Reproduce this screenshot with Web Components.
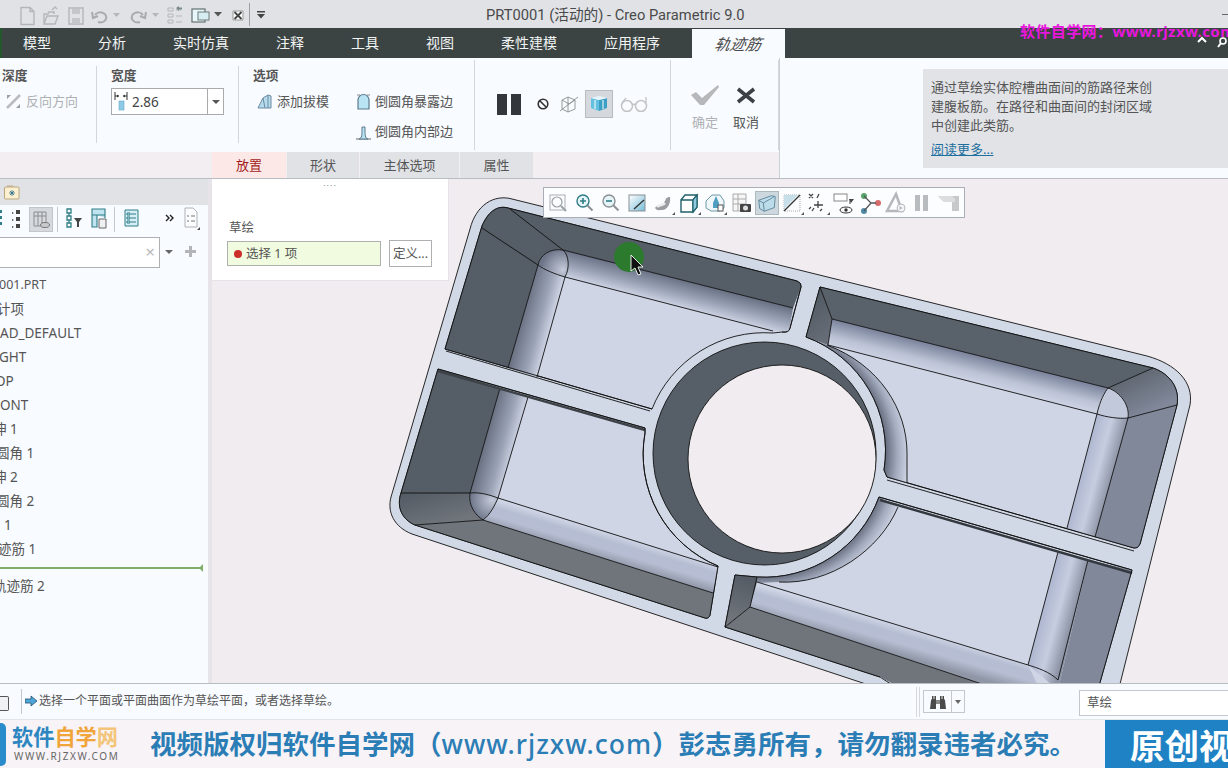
<!DOCTYPE html>
<html lang="zh">
<head>
<meta charset="utf-8">
<title>PRT0001 - Creo Parametric 9.0</title>
<style>
  html, body { margin: 0; padding: 0; overflow: hidden; }
  body { width: 1228px; height: 768px; font-family: "Noto Sans", "Noto Sans CJK SC", sans-serif; color: #444; }
  cr-app { width: 1228px; height: 768px; }
</style>
</head>
<body>
<cr-app></cr-app>
<script>
const FONT = `"Noto Sans", "Noto Sans CJK SC", sans-serif`

class CrTitlebar extends HTMLElement {
  constructor () {
    super()
    this.attachShadow({ mode: 'open' })
  }
  connectedCallback () {
    const g = 'fill="none" stroke="#b4b7ba" stroke-width="1.4"'
    this.shadowRoot.innerHTML = `
    <style>
      :host { display: flex; height: 28px; background: #e0e2e6; align-items: center; position: relative; }
      svg { display: block; flex: none; }
      .title { position: absolute; left: 486px; top: 5px; font: 14.700px/20px "Roboto", "Noto Sans CJK SC", sans-serif; color: #4a4a4a; white-space: nowrap; }
      .qat { display: flex; align-items: center; }
      .min { position: absolute; left: 1222px; top: 14px; width: 8px; height: 1px; background: #666; }
    </style>
    <div class="qat">
      <svg width="268" height="28" viewBox="0 0 268 28">
        <path d="M21 7.500h9l4 4v13h-13z M30 7.500v4h4" ${g}/>
        <path d="M44 24v-10h4l1-2h5v2 M44 24h11l3-8h-11l-3 8z M52 10l3-3 2 2" ${g}/>
        <path d="M69 8h14v16h-14z" ${g} stroke-width="2"/><rect x="72" y="9" width="8" height="5" fill="#c4c6c9"/><rect x="72" y="18" width="8" height="6" fill="#c4c6c9"/>
        <path d="M95 15a6 5 0 1 1 3 7 M92 12l1 6 5-2" fill="none" stroke="#a9acaf" stroke-width="2"/>
        <path d="M113 13h7l-3.500 4z" fill="#b4b7ba"/>
        <path d="M143 15a6 5 0 1 0-3 7 M146 12l-1 6-5-2" fill="none" stroke="#a9acaf" stroke-width="2"/>
        <path d="M152 13h7l-3.500 4z" fill="#b4b7ba"/>
        <path d="M168 8h5v3h-5z M168 14h5v3h-5z M168 20h5v3h-5z M176 10h5 M176 16h6 M176 22h6" fill="none" stroke="#b4b7ba"/><path d="M176 8l3-2v1.500h3v2h-3v1.500z" fill="#7d8a8a"/>
        <rect x="192" y="9" width="13" height="13" fill="#e7f6f8" stroke="#6f7a7a" stroke-width="1.300"/><rect x="198" y="12" width="11" height="8" fill="#d6eef2" stroke="#6f7a7a"/>
        <path d="M214 12h8l-4 4.500z" fill="#555"/>
        <path d="M233 11h10v9h-10z" fill="#fff" stroke="#999"/><path d="M234.500 12l7 7M241.500 12l-7 7" stroke="#444" stroke-width="1.800"/>
        <rect x="249" y="3" width="1" height="23" fill="#9ca0a4"/>
        <path d="M257 11h8v1.500h-8z M257 14h8l-4 4.500z" fill="#444"/>
      </svg>
    </div>
    <span class="title">PRT0001 (活动的) - Creo Parametric 9.0</span>
    <span class="min"></span>
    `
  }
}

class CrMenuTabs extends HTMLElement {
  constructor () {
    super()
    this.attachShadow({ mode: 'open' })
  }
  connectedCallback () {
    const names = ['模型', '分析', '实时仿真', '注释', '工具', '视图', '柔性建模', '应用程序']
    this.shadowRoot.innerHTML = `
    <style>
      :host { display: flex; height: 30px; background: #3b4443; position: relative; font: 14px/30px ${FONT}; color: #f2f4f4; }
      .edge { width: 2px; margin-right: -2.500px; background: #24582c; }
      .tab { padding: 0 23.500px; white-space: nowrap; }
      .active { margin-left: 8.500px; margin-top: 1px; width: 93px; box-sizing: border-box; text-align: center; background: #f8fbff; color: #4a4a4a; font: italic 15.500px/29px "Noto Sans CJK SC", sans-serif; }
      .active span { display: inline-block; transform: skewX(-12deg); }
      .mark { position: absolute; left: 1020px; top: -6px; width: 208px; overflow: hidden; white-space: nowrap; color: #e816dc; font: bold 15px/18px ${FONT}; letter-spacing: .4px; }
      svg { position: absolute; left: 1190px; top: 3px; }
    </style>
    <span class="edge"></span>
    ${names.map(n => `<span class="tab">${n}</span>`).join('')}
    <span class="active"><span>轨迹筋</span></span>
    <svg width="38" height="18" viewBox="0 0 38 18">
      <path d="M8 11l4-4 4 4" fill="none" stroke="#fff" stroke-width="2"/>
      <circle cx="33" cy="10" r="3" fill="none" stroke="#fff" stroke-width="1.600"/><path d="M31 12l-3 4" stroke="#fff" stroke-width="2"/>
    </svg>
    <span class="mark">软件自学网：www.rjzxw.com</span>
    `
  }
}

class CrGroup extends HTMLElement {
  constructor () {
    super()
    this.attachShadow({ mode: 'open' })
  }
  connectedCallback () {
    const label = this.getAttribute('label')
    this.shadowRoot.innerHTML = `
    <style>
      :host { display: block; box-sizing: border-box; border-right: 1px solid #d3d6da; flex: none; }
      .label { font: bold 12.700px/16px "Noto Sans CJK SC", sans-serif; color: #555; height: 16px; }
    </style>
    ${label ? `<div class="label">${label}</div>` : ''}
    <slot></slot>
    `
  }
}

class CrRibbon extends HTMLElement {
  constructor () {
    super()
    this.attachShadow({ mode: 'open' })
  }
  connectedCallback () {
    this.shadowRoot.innerHTML = `
    <style>
      :host { display: flex; height: 94px; background: #f8fbff; font: 13px/18px ${FONT}; color: #555; }
      svg { display: block; flex: none; }
      #g1 { width: 97px; margin: 8px 0 9px; padding: 1px 0 0 2px; }
      #g2 { width: 142px; margin: 8px 0 9px; padding: 1px 0 0 14px; }
      #g3 { width: 236px; margin: 2px 0; padding: 7px 0 0 14px; }
      #g4 { width: 196px; margin: 2px 0; padding: 0; display: flex; }
      #g5 { width: 108px; margin: 2px 0; }
      .btn { display: flex; align-items: center; gap: 4px; white-space: nowrap; height: 30px; }
      .off { color: #aeb0b3; }
      .reverse { margin: 3px 0 0 3px; }
      .input { display: flex; align-items: center; box-sizing: border-box; width: 113px; height: 27px; margin-top: 5px; border: 1px solid #a8aaae; background: #fff; font-size: 13.500px; color: #444; }
      .input span { flex: 1; padding-left: 0; }
      .input i { width: 15px; height: 25px; border-left: 1px solid #a8aaae; display: flex; align-items: center; justify-content: center; }
      .input i::after { content: ""; border: 4px solid transparent; border-top: 4px solid #555; border-bottom: 0; }
      .opts { display: grid; grid-template-columns: 99px auto; grid-auto-rows: 30px; margin: 3px 0 0 4px; width: 210px; }
      .tools { display: flex; align-items: center; height: 88px; }
      .pause { display: flex; gap: 4px; margin-left: 22px; }
      .pause b { width: 10px; height: 21px; background: #33363a; }
      .act { width: 28px; height: 28px; background: #d5d9dd; border: 1px solid #b8bcc0; box-sizing: border-box; display: flex; align-items: center; justify-content: center; margin: 0 7px 0 5px; }
      .finish { display: grid; grid-template-columns: 42px 40px; margin-left: 13px; padding-top: 24px; justify-items: center; font-size: 13px; line-height: 18px; }
      .finish svg { margin-bottom: 7px; }
    </style>
    <cr-group id="g1" label="深度">
      <div class="btn off reverse">
        <svg width="17" height="17" viewBox="0 0 17 17"><path d="M2 15L15 2" stroke="#b9bbbe" stroke-width="2.500"/><path d="M2 2l4 0-4 4zM15 15l-4 0 4-4z" fill="#9a9da0"/></svg>
        <span>反向方向</span>
      </div>
    </cr-group>
    <cr-group id="g2" label="宽度">
      <div class="input">
        <svg width="20" height="25" viewBox="0 0 20 25"><path d="M3 3v8M15 3v8M3 7h4M11 7h4" stroke="#333" fill="none"/><path d="M5 5.500L7 7 5 8.500zM13 5.500L11 7l2 1.500z" fill="#333"/><rect x="7" y="12" width="5" height="9" fill="#8fcbe6" stroke="#6aa9c9" stroke-width=".6"/></svg>
        <span>2.86</span><i></i>
      </div>
    </cr-group>
    <cr-group id="g3" label="选项">
      <div class="opts">
        <div class="btn"><svg width="16" height="17" viewBox="0 0 16 17"><path d="M1 15L6 5l5-3 3 1v12z" fill="#b5dcee" stroke="#6c8a9e"/><path d="M6 5l2 10M11 2v13" stroke="#6c8a9e" fill="none"/></svg><span>添加拔模</span></div>
        <div class="btn"><svg width="15" height="17" viewBox="0 0 15 17"><path d="M2 16V7a5.500 5.500 0 0 1 11 0v9z" fill="#b8e4f4" stroke="#5d7a8c" stroke-width="1.200"/><path d="M1 2h3M11 2h3" stroke="#8a8f93"/></svg><span>倒圆角暴露边</span></div>
        <div></div>
        <div class="btn"><svg width="15" height="17" viewBox="0 0 15 17"><path d="M0 16h15" stroke="#666"/><path d="M3 16c3-1 3-3 3-12h3c0 9 0 11 3 12z" fill="#b8e4f4" stroke="#5d7a8c"/></svg><span>倒圆角内部边</span></div>
      </div>
    </cr-group>
    <cr-group id="g4">
      <div class="tools">
        <div class="pause"><b></b><b></b></div>
        <svg style="margin-left:15px" width="14" height="14" viewBox="0 0 14 14"><circle cx="7" cy="7" r="4.800" fill="none" stroke="#333" stroke-width="1.600"/><path d="M3.500 3.500l7 7" stroke="#333" stroke-width="1.600"/></svg>
        <svg style="margin-left:9px" width="21" height="20" viewBox="0 0 21 20"><path d="M3 6l6-3 7 3v9l-7 3-6-3zM9 3v15M3 6l7 4 6-4M1 17L19 3" fill="none" stroke="#8b8e91" stroke-width=".9"/></svg>
        <div class="act"><svg width="20" height="18" viewBox="0 0 20 18"><path d="M2 3l8 2v11l-8-3z" fill="#63c0e0"/><path d="M18 3l-8 2v11l8-3z" fill="#3d9fc6"/><path d="M2 3l8-2 8 2-8 2z" fill="#e6f5fb"/><path d="M6 5v9M14 5v9" stroke="#fff"/></svg></div>
        <svg width="28" height="16" viewBox="0 0 28 16"><circle cx="7" cy="10" r="5.500" fill="none" stroke="#c2c4c6" stroke-width="1.500"/><circle cx="21" cy="10" r="5.500" fill="none" stroke="#c2c4c6" stroke-width="1.500"/><path d="M12 9q2-1.500 4 0M2 7L6 2M26 7V1" fill="none" stroke="#c2c4c6" stroke-width="1.300"/></svg>
      </div>
    </cr-group>
    <cr-group id="g5">
      <div class="finish">
        <svg width="30" height="22" viewBox="0 0 30 22"><path d="M1 11l5-3 6 6L28 1l1 2-15 18h-4z" fill="#b6b8ba"/></svg>
        <svg width="22" height="22" viewBox="0 0 22 22"><path d="M3 5l16 13M19 5L3 18" stroke="#3d4145" stroke-width="3.600"/></svg>
        <span class="off">确定</span><span>取消</span>
      </div>
    </cr-group>
    `
  }
}

class CrSubTabs extends HTMLElement {
  constructor () {
    super()
    this.attachShadow({ mode: 'open' })
  }
  connectedCallback () {
    this.shadowRoot.innerHTML = `
    <style>
      :host { display: flex; height: 26px; background: #f2eef1; padding-left: 212px; font: 13px/26px ${FONT}; color: #555; gap: 1px; }
      span { background: #e0e2e6; text-align: center; }
      .on { background: #fde8e8; color: #a31c1c; }
    </style>
    <span class="on" style="width:74px">放置</span>
    <span style="width:72px">形状</span>
    <span style="width:99px">主体选项</span>
    <span style="width:73px">属性</span>
    `
  }
}

class CrHelp extends HTMLElement {
  constructor () {
    super()
    this.attachShadow({ mode: 'open' })
  }
  connectedCallback () {
    this.shadowRoot.innerHTML = `
    <style>
      :host { display: block; box-sizing: border-box; width: 305px; height: 99px; margin: 11px 0 0 143px; padding: 9px 0 0 8px; background: #e1e3e7; font: 13px/19px ${FONT}; color: #555; }
      a { display: block; margin-top: 5px; color: #1c6f9e; text-decoration: underline; }
    </style>
    <div>通过草绘实体腔槽曲面间的筋路径来创<br>建腹板筋。在路径和曲面间的封闭区域<br>中创建此类筋。</div>
    <a>阅读更多...</a>
    `
  }
}

class CrTree extends HTMLElement {
  constructor () {
    super()
    this.attachShadow({ mode: 'open' })
  }
  connectedCallback () {
    const rows = [['001.PRT', -1, 12.5], ['计项', -3], ['AD_DEFAULT', 0], ['GHT', -1], ['OP', -5], ['ONT', 0], ['伸 1', -7], ['圆角 1', -4], ['伸 2', -7], ['圆角 2', -4], ['1', 4], ['迹筋 1', -2]]
    this.shadowRoot.innerHTML = `
    <style>
      :host { display: block; width: 208px; background: #f8fbff; font: 13.500px/24px ${FONT}; color: #555; overflow: hidden; flex: none; }
      svg { display: block; flex: none; }
      .strip { height: 26px; background: #e0e2e6; display: flex; align-items: center; padding-left: 4px; }
      .bar { height: 32px; display: flex; align-items: center; }
      .search { display: flex; align-items: center; height: 31px; }
      .field { box-sizing: border-box; width: 160px; height: 31px; border: 1px solid #aeb0b4; border-left: 0; background: #fff; color: #bbb; font-size: 17px; text-align: right; padding-right: 4px; line-height: 28px; }
      .rows { padding-top: 5px; }
      .rows div { height: 24px; white-space: nowrap; }
      .line { position: relative; height: 2px; margin: 6px 5px 5px 0; background: #7fae6a; }
      .line::after { content: ""; position: absolute; right: 0; top: -3px; border: 4px solid transparent; border-right: 4px solid #7fae6a; border-left: 0; }
    </style>
    <div class="strip">
      <svg width="16" height="16" viewBox="0 0 16 16"><path d="M3 1h6l1 2H3z" fill="#cfc7b4"/><rect x=".5" y="3" width="14.500" height="12" rx="1" fill="#fdf0d0" stroke="#b9a67e"/><path d="M8 6v6M5 9h6M6 7l4 4M10 7l-4 4" stroke="#27698a" stroke-width=".8"/></svg>
    </div>
    <div class="bar">
      <svg width="208" height="32" viewBox="0 0 208 32">
        <path d="M0 5h2v3h-2zM0 11h2v3h-2zM0 17h2v3h-2z" fill="#2e7f86"/>
        <path d="M16 5h4v4h-4zM16 12h4v4h-4zM16 19h4v4h-4z" fill="#444"/><path d="M12 7l2 1-2 1zM12 14l2 1-2 1zM12 21l2 1-2 1z" fill="#444"/>
        <rect x="29.500" y="2.500" width="23" height="24" fill="#d6d9dd" stroke="#c2c5c9"/><path d="M34 7h12v14h-12zM38 7v14M42 7v14M34 11h12" fill="none" stroke="#8a8e92"/><ellipse cx="45" cy="20" rx="4.500" ry="2.500" fill="#c8cbce" stroke="#777"/>
        <rect x="57" y="2" width="1" height="25" fill="#c7cacd"/>
        <path d="M67 4h4v4h-4zM67 11h4v4h-4zM67 18h4v4h-4zM69 8v3M69 15v3" fill="none" stroke="#2f7d85" stroke-width="1.300"/><path d="M74 13h8l-3 4v5h-2v-5z" fill="#444"/>
        <path d="M92 4h13v6h-13zM92 10h5v12h-5zM97 10h8v3" fill="#bfe3ef" stroke="#2f7d85" stroke-width="1.100"/><path d="M99 14h7v9h-7z" fill="#eef0f2" stroke="#666"/>
        <rect x="114" y="2" width="1" height="25" fill="#c7cacd"/>
        <path d="M125 5h13v16h-13z" fill="#d7eef6" stroke="#2f7d85"/><path d="M127 8h3v2h-3zM127 12h3v2h-3zM127 16h3v2h-3zM131 9h5M131 13h5M131 17h5" stroke="#2f7d85" fill="none"/>
        <path d="M166 10l3 3-3 3M170 10l3 3-3 3" fill="none" stroke="#222" stroke-width="1.400"/>
        <path d="M185 3h8l4 4v15h-12z" fill="#fbfcfd" stroke="#aeb2b6"/><path d="M187 11h2M187 16h2M191 11h4M191 16h4" stroke="#777"/><path d="M200 25v-3l-3 3z" fill="#444"/>
      </svg>
    </div>
    <div class="search">
      <div class="field">×</div>
      <svg width="48" height="31" viewBox="0 0 48 31"><path d="M5 13h8l-4 4z" fill="#666"/><path d="M25 14.500h11M30.500 9v11" stroke="#b2b4b7" stroke-width="3"/></svg>
    </div>
    <div class="rows">
      ${rows.map(r => `<div style="margin-left:${r[1]}px${r[2] ? `;font-size:${r[2]}px` : ''}">${r[0]}</div>`).join('')}
    </div>
    <div class="line"></div>
    <div class="rows" style="padding:0"><div style="margin-left:-7px">轨迹筋 2</div></div>
    `
  }
}

class CrSketchPanel extends HTMLElement {
  constructor () {
    super()
    this.attachShadow({ mode: 'open' })
  }
  connectedCallback () {
    this.shadowRoot.innerHTML = `
    <style>
      :host { display: block; box-sizing: border-box; position: absolute; left: 0; top: 0; width: 237px; height: 102px; background: #fff; border: 1px solid #e4e4e8; border-width: 0 1px 1px 0; font: 13px/18px ${FONT}; color: #555; }
      .dots { text-align: center; height: 12px; color: #999; font-size: 9px; line-height: 14px; letter-spacing: 1px; }
      .label { margin: 28px 0 0 17px; font-size: 12.500px; }
      .row { display: flex; gap: 8px; margin: 3px 0 0 15px; align-items: center; }
      .pick { box-sizing: border-box; width: 154px; height: 25px; border: 1px solid #aeb0ae; background: #f1fbdf; display: flex; align-items: center; padding-left: 6px; gap: 4px; font-size: 12.500px; }
      .pick i { width: 8px; height: 8px; border-radius: 50%; background: #cc2f2a; }
      .def { box-sizing: border-box; width: 43px; height: 27px; border: 1px solid #aeb0b4; text-align: center; line-height: 25px; font-size: 12.500px; white-space: nowrap; }
    </style>
    <div class="dots">····</div>
    <div class="label">草绘</div>
    <div class="row"><div class="pick"><i></i><span>选择 1 项</span></div><div class="def">定义...</div></div>
    `
  }
}

class CrViewBar extends HTMLElement {
  constructor () {
    super()
    this.attachShadow({ mode: 'open' })
  }
  connectedCallback () {
    const lens = (c, inner) => `<circle cx="10" cy="10" r="6" fill="#e6f3f7" stroke="${c}" stroke-width="1.400"/><path d="M14.500 14.500l5 5" stroke="#8b9094" stroke-width="2"/>${inner}`
    const drop = '<path d="M24 24v-3l-3 3z" fill="#555"/>'
    const icons = [
      `<rect x="3" y="4" width="15" height="15" fill="#fafcfd" stroke="#aab0b4"/><circle cx="10" cy="11" r="5" fill="none" stroke="#9aa0a4" stroke-width="1.200"/><path d="M14 15l5 5" stroke="#9aa0a4" stroke-width="2"/>`,
      lens('#2f7d85', '<path d="M7 10h6M10 7v6" stroke="#2f7d85" stroke-width="1.600"/>'),
      lens('#8b9094', '<path d="M7 10h6" stroke="#2f7d85" stroke-width="1.600"/>'),
      `<defs><linearGradient id="rp" x1="0" y1="0" x2="1" y2="1"><stop offset="0" stop-color="#fff"/><stop offset="1" stop-color="#77bcd8"/></linearGradient></defs><rect x="4" y="4" width="16" height="16" fill="url(#rp)" stroke="#8b9094"/><path d="M9 18L19 9" stroke="#333" stroke-width="1.300"/>`,
      `<path d="M4 17c3-5 7-1 9-5s2-6 6-6c1 5-2 13-8 13-3 0-5 1-7-2z" fill="#9a9d9f"/><path d="M6 16c3-3 6-1 8-4" stroke="#eceded" stroke-width="2.400" fill="none"/>` + drop,
      `<path d="M4 9h12v12h-12zM4 9l4-5h12l-4 5M16 21l4-5V4" fill="#fff" stroke="#20606a" stroke-width="1.400"/><path d="M16 9l4-5v12l-4 5z" fill="#8fcbe0" stroke="#20606a" stroke-width="1.200"/>` + drop,
      `<path d="M3 10l6-6h8l4 6v7l-4 3h-9l-5-3z" fill="#f0f7fa" stroke="#6f9aa8"/><path d="M10 12l3-7 3 7v5h-6z" fill="#4f9fc2"/><rect x="15" y="14" width="5" height="6" fill="#fff" stroke="#555"/>` + drop,
      `<path d="M4 3h13v17h-13zM4 8h13M4 13h13M9 3v17" fill="#f6f6f6" stroke="#aaa"/><rect x="11" y="13" width="11" height="8" rx="1" fill="#444"/><circle cx="16.500" cy="17" r="2.500" fill="#ddd"/>`,
      `<path d="M3 9l14-5 4 1-1 12-11 4-5-3z" fill="#bcdcea" stroke="#5d8499"/><path d="M3 9l5 3 12-7M8 12l1 9" fill="none" stroke="#5d8499"/>`,
      `<rect x="4" y="4" width="16" height="16" fill="none" stroke="#aaa" stroke-dasharray="1 1"/><path d="M4 20L20 4" stroke="#333" stroke-width="1.300"/><path d="M4 4h14L4 18z" fill="#c6dfe9"/>` + drop,
      `<path d="M3 3l4 4M7 3l-4 4M13 3l-2 4M12 10v7M8 14h9M6 20l2-3M3 18l2-2M14 20l2-2" stroke="#444" stroke-width="1.300" fill="none"/>` + drop,
      `<rect x="2" y="3" width="13" height="7" fill="#fff" stroke="#888"/><path d="M17 8h5l-3 4z" fill="#444"/><path d="M18 13v-5" stroke="#444"/><ellipse cx="14" cy="19" rx="6" ry="3" fill="#fff" stroke="#333"/><circle cx="14" cy="19" r="1.700" fill="#333"/>`,
      `<circle cx="6" cy="5" r="3" fill="#5aa46c"/><circle cx="6" cy="20" r="3" fill="#4f8aa5"/><circle cx="20" cy="12" r="3" fill="#d66a6a"/><path d="M6 5l7 7-7 8M13 12h5" stroke="#555" fill="none" stroke-width="1.300"/>`,
      `<path d="M12 3L3 20h15z" fill="none" stroke="#b5b7ba" stroke-width="2.500"/><circle cx="17" cy="17" r="4" fill="#f4f5f6" stroke="#b5b7ba"/><path d="M15.500 15l3 2-3 2z" fill="#b5b7ba"/>`,
      `<rect x="5" y="4" width="5" height="16" fill="#b9bcbf"/><rect x="13" y="4" width="5" height="16" fill="#b9bcbf"/>`,
      `<path d="M2 5h21v15h-7v-9h-8z" fill="#c6c8ca"/><path d="M2 5h14l3 3v3h-11z" fill="#dcdddf"/>`
    ]
    this.shadowRoot.innerHTML = `
    <style>
      :host { display: flex; box-sizing: border-box; position: absolute; left: 331px; top: 8px; width: 422px; height: 31px; padding: 0 3px 0 2px; background: #fbfdff; border: 1px solid #a9aeb6; align-items: center; }
      span { width: 26px; height: 24px; display: flex; align-items: center; justify-content: center; box-sizing: border-box; }
      .on { background: #cdd7de; border: 1px solid #aeb8bf; width: 24px; margin: 0 1px; }
    </style>
    ${icons.map((s, i) => `<span class="${i === 8 ? 'on' : ''}"><svg width="24" height="24" viewBox="0 0 24 24">${s}</svg></span>`).join('')}
    `
  }
}

class CrModel extends HTMLElement {
  constructor () {
    super()
    this.attachShadow({ mode: 'open' })
  }
  connectedCallback () {
    const floor = '#cfd5e5'
    const wall = '#555d66'
    const sideWall = '#80889a'
    const lowWall = '#70757b'
    this.shadowRoot.innerHTML = `
    <style>
      :host { display: block; width: 100%; height: 100%; }
      svg { display: block; }
      .ln { fill: none; stroke: #111; stroke-width: .9; }
    </style>
    <svg width="1016" height="504" viewBox="212 179 1016 504">
      <defs>
        <linearGradient id="f1" gradientUnits="userSpaceOnUse" x1="680" y1="279" x2="673" y2="306"><stop offset="0" stop-color="#676f83"/><stop offset=".55" stop-color="#9ca4b8"/><stop offset="1" stop-color="${floor}"/></linearGradient>
        <linearGradient id="f2" gradientUnits="userSpaceOnUse" x1="521" y1="320" x2="551" y2="328"><stop offset="0" stop-color="#687082"/><stop offset=".6" stop-color="#9ba3b6"/><stop offset="1" stop-color="${floor}"/></linearGradient>
        <linearGradient id="f3" gradientUnits="userSpaceOnUse" x1="485" y1="440" x2="515" y2="448"><stop offset="0" stop-color="#687082"/><stop offset=".6" stop-color="#9ba3b6"/><stop offset="1" stop-color="${floor}"/></linearGradient>
        <linearGradient id="f4" gradientUnits="userSpaceOnUse" x1="600" y1="530" x2="592" y2="557"><stop offset="0" stop-color="#d0d6e6"/><stop offset=".3" stop-color="#b5bdd2"/><stop offset=".6" stop-color="#b7bed3"/><stop offset="1" stop-color="#8f96a6"/></linearGradient>
        <linearGradient id="f5" gradientUnits="userSpaceOnUse" x1="960" y1="351" x2="953" y2="379"><stop offset="0" stop-color="#79829a"/><stop offset=".6" stop-color="#bcc3d6"/><stop offset="1" stop-color="${floor}"/></linearGradient>
        <linearGradient id="f6" gradientUnits="userSpaceOnUse" x1="1082" y1="470" x2="1112" y2="478"><stop offset="0" stop-color="#aeb7d0"/><stop offset=".5" stop-color="#c7cde0"/><stop offset="1" stop-color="#8b93a4"/></linearGradient>
        <linearGradient id="f7" gradientUnits="userSpaceOnUse" x1="850" y1="611" x2="842" y2="639"><stop offset="0" stop-color="#d0d6e6"/><stop offset=".3" stop-color="#b5bdd2"/><stop offset=".6" stop-color="#b7bed3"/><stop offset="1" stop-color="#8f96a6"/></linearGradient>
        <linearGradient id="f8" gradientUnits="userSpaceOnUse" x1="1043" y1="610" x2="1073" y2="618"><stop offset="0" stop-color="#aeb7d0"/><stop offset=".5" stop-color="#c7cde0"/><stop offset="1" stop-color="#8b93a4"/></linearGradient>
        <linearGradient id="c1" gradientUnits="userSpaceOnUse" x1="1130" y1="370" x2="1150" y2="412"><stop offset="0" stop-color="#5c636c"/><stop offset="1" stop-color="${sideWall}"/></linearGradient>
        <linearGradient id="c2" gradientUnits="userSpaceOnUse" x1="430" y1="490" x2="440" y2="525"><stop offset="0" stop-color="${wall}"/><stop offset="1" stop-color="${lowWall}"/></linearGradient>
        <linearGradient id="c3" gradientUnits="userSpaceOnUse" x1="800" y1="300" x2="835" y2="340"><stop offset="0" stop-color="#4f5760"/><stop offset="1" stop-color="#69707a"/></linearGradient>
        <linearGradient id="c4" gradientUnits="userSpaceOnUse" x1="745" y1="580" x2="730" y2="625"><stop offset="0" stop-color="#565d66"/><stop offset="1" stop-color="#74787e"/></linearGradient>
        <radialGradient id="fade" gradientUnits="userSpaceOnUse" cx="764" cy="454" r="145"><stop offset=".83" stop-color="#5d6474"/><stop offset=".92" stop-color="#a2aabd"/><stop offset="1" stop-color="${floor}"/></radialGradient>
        <radialGradient id="c5" gradientUnits="userSpaceOnUse" cx="563" cy="270" r="22"><stop offset="0" stop-color="#c4cad9"/><stop offset="1" stop-color="#6d7589"/></radialGradient>
        <radialGradient id="c6" gradientUnits="userSpaceOnUse" cx="492" cy="500" r="22"><stop offset="0" stop-color="#c4cad9"/><stop offset="1" stop-color="#6d7589"/></radialGradient>
      </defs>
      <rect x="212" y="179" width="1016" height="504" fill="#f1ecef"/>

      <path class="ln" style="fill:#d1d8e6" d="M391 497L470 229C476 205 494 194 512 199L1147 356C1176 364 1194 382 1190 405L1116 700L890 692L412 534C394 527 387 512 391 497Z"/>

      <path class="ln" style="fill:${floor}" d="M445 349L482 226C488 212 497 205 508 208L797 281Q802 283 801 287L790 328Q789 333 782 332L773 333A121 121 0 0 0 652 409Z"/>
      <path style="fill:${wall}" d="M482 226C488 212 497 205 508 208L797 281Q802 283 801 287L793 308L563 250C550 248 540 255 538 265L508 368L445 349Z"/>
      <path style="fill:url(#f1)" d="M563 250L793 308L789 331L773 331L565 277Z"/>
      <path style="fill:url(#f2)" d="M538 265L508 368L537 377L565 277Z"/>
      <path style="fill:url(#c5)" d="M538 265C540 255 550 248 563 250C569 255 570 268 565 277Z"/>
      <path class="ln" d="M510 209L563 250L793 308M482 228L538 265L508 368M563 250C550 248 540 255 538 265C545 270 555 274 565 277L537 377M563 250C569 255 570 268 565 277L773 331"/>
      <path class="ln" d="M445 349L652 409M446 351L650 411"/>
      <path class="ln" d="M445 349L482 226C488 212 497 205 508 208L797 281Q802 283 801 287L790 328Q789 333 782 332"/>

      <path class="ln" style="fill:${floor}" d="M438 369L645 428L645 433A121 121 0 0 0 718 566L710 615Q709 619 705 618L415 525C403 520 396 508 401 493Z"/>
      <path style="fill:${wall}" d="M438 369L500 388L470 493L401 493Z"/>
      <path style="fill:url(#f3)" d="M500 388L528 397L498 498L470 493Z"/>
      <path style="fill:url(#c2)" d="M401 493L470 493C468 505 475 515 483 520L415 525C403 520 396 508 401 493Z"/>
      <path style="fill:${lowWall}" d="M415 525L483 520L713 593L710 615Q709 619 705 618Z"/>
      <path style="fill:url(#f4)" d="M498 498L718 567L713 593L483 520C490 515 495 505 498 498Z"/>
      <path style="fill:url(#c6)" d="M470 493C480 492 490 495 498 498C495 505 490 515 483 520C475 515 468 505 470 493Z"/>
      <path class="ln" d="M500 388L470 493L401 493M528 397L498 498L718 567M470 493C480 492 490 495 498 498C495 505 490 515 483 520C475 515 468 505 470 493M415 525L483 520L713 593"/>
      <path d="M438 371L645 430" stroke="#3d4248" stroke-width="2.500" fill="none"/>
      <path class="ln" d="M438 369L645 428L645 433A121 121 0 0 0 718 566L710 615Q709 619 705 618L415 525C403 520 396 508 401 493Z"/>

      <path class="ln" style="fill:${floor}" d="M820 287L1153 368C1170 374 1180 388 1177 405L1140 544Q1138 549 1134 548L887 477L884 470A121 121 0 0 0 806 337Z"/>
      <path style="fill:url(#fade)" d="M827 345C880 365 907 410 907 453L907 483L887 477L884 470A121 121 0 0 0 806 337Z"/>
      <path style="fill:#59616a" d="M820 287L1153 368L1108 388L832 319Z"/>
      <path style="fill:url(#c3)" d="M820 287L832 319L828 345L806 337Z"/>
      <path style="fill:url(#f5)" d="M832 319L1108 388C1102 396 1098 405 1097 414L828 345Z"/>
      <path style="fill:url(#c1)" d="M1108 388L1153 368C1170 374 1180 388 1177 405L1128 418C1130 405 1120 392 1108 388Z"/>
      <path style="fill:${sideWall}" d="M1177 405L1128 418L1095 537L1134 548Q1138 549 1140 544Z"/>
      <path style="fill:url(#f6)" d="M1097 414L1128 418L1095 537L1067 528Z"/>
      <path style="fill:#c2c9db" d="M1097 414C1100 400 1105 392 1108 388C1120 392 1130 405 1128 418C1118 419 1106 417 1097 414Z"/>
      <path class="ln" d="M832 319L1108 388M828 345L1097 414L1067 528M1128 418L1095 537M820 287L832 319L828 345M1108 388L1153 368M1128 418L1177 405M1097 414C1100 400 1105 392 1108 388C1120 392 1130 405 1128 418C1118 419 1106 417 1097 414M827 345C880 365 907 410 907 453L907 483"/>
      <path class="ln" d="M887 480L1134 551"/>
      <path class="ln" d="M820 287L1153 368C1170 374 1180 388 1177 405L1140 544Q1138 549 1134 548L887 477L884 470A121 121 0 0 0 806 337Z"/>

      <path class="ln" style="fill:${floor}" d="M879 497L1132 570L1095 700L900 690L880 677L725 627L735 575L757 577A122 122 0 0 0 879 497Z"/>
      <path style="fill:url(#fade)" d="M779 582C830 585 880 550 898 507L879 497A122 122 0 0 1 757 577L757 583Z"/>
      <path style="fill:url(#c4)" d="M735 575L757 577L757 587L750 607L725 627Z"/>
      <path style="fill:${lowWall}" d="M725 627L750 607L985 685L905 690L880 677Z"/>
      <path style="fill:url(#f7)" d="M757 582L1028 665L1040 690L985 685L750 607Z"/>
      <path style="fill:${sideWall}" d="M1088 560L1132 570L1095 700L1058 690Z"/>
      <path style="fill:url(#f8)" d="M1058 552L1088 560L1058 690L1028 665Z"/>
      <path class="ln" d="M757 582L1028 665L1058 552M750 607L985 685M1088 560L1058 680M1028 665C1038 668 1050 672 1058 680M757 577L750 607L725 627M779 582C830 585 880 550 898 507"/>
      <path d="M880 500L1132 573" stroke="#33383e" stroke-width="2.400" fill="none"/>
      <path class="ln" d="M879 497L1132 570L1095 700M880 677L725 627L735 575L757 577A122 122 0 0 0 879 497"/>

      <circle class="ln" style="fill:#565e67" cx="764.500" cy="453.500" r="111.500"/>
      <circle class="ln" style="fill:#f1ecef" cx="782" cy="459" r="94"/>

      <circle cx="629" cy="257" r="15" fill="#2b7a2e"/>
      <path d="M631 255L631 271L635 268L638 275L641 274L638 267L643 267Z" fill="#111" stroke="#fff" stroke-width=".9"/>
    </svg>
    `
  }
}

class CrStatus extends HTMLElement {
  constructor () {
    super()
    this.attachShadow({ mode: 'open' })
  }
  connectedCallback () {
    this.shadowRoot.innerHTML = `
    <style>
      :host { display: flex; box-sizing: border-box; height: 37px; background: #f8fbff; border-top: 1px solid #b9bcc2; border-bottom: 1px solid #e2e4e8; font: 12px/18px ${FONT}; color: #555; align-items: center; }
      svg { display: block; flex: none; }
      .check { box-sizing: border-box; width: 9px; height: 15px; border: 1px solid #555; border-left: 0; border-radius: 0 2px 2px 0; background: #eef2f5; margin-top: 3px; }
      .sep { width: 1px; height: 25px; background: #c3c6ca; margin-left: 12px; }
      .msg { flex: 1; margin: -1px 0 0 3px; display: flex; align-items: center; gap: 2px; }
      .bino { display: flex; align-items: center; box-sizing: border-box; width: 42px; height: 23px; border: 1px solid #c4c7cb; margin: 0 0 0 3px; }
      .bino span { width: 27px; display: flex; justify-content: center; border-right: 1px solid #c4c7cb; height: 21px; align-items: center; }
      .bino i { flex: 1; display: flex; justify-content: center; }
      .bino i::after { content: ""; border: 3.500px solid transparent; border-top: 4px solid #666; border-bottom: 0; }
      .dbl { width: 4px; height: 30px; border: 1px solid #d5d7da; border-width: 0 1px; box-sizing: border-box; margin-left: 0; }
      .filter { box-sizing: border-box; width: 149px; height: 26px; margin: 2px 0 0 114px; background: #fff; border: 1px solid #c4c7cb; border-right: 0; padding-left: 7px; line-height: 24px; font-size: 12.500px; }
    </style>
    <div class="check"></div>
    <div class="sep"></div>
    <div class="msg">
      <svg width="12" height="12" viewBox="0 0 12 12"><path d="M0 4h6V1l6 5-6 5V8H0z" fill="#4ea6d8" stroke="#24506e" stroke-width=".8"/></svg>
      <span>选择一个平面或平面曲面作为草绘平面，或者选择草绘。</span>
    </div>
    <div class="dbl"></div>
    <div class="bino">
      <span><svg width="18" height="16" viewBox="0 0 18 16"><path d="M1 15l1-9 1-1V2h4v13zM17 15l-1-9-1-1V2h-4v13z" fill="#4a4a4a"/><path d="M4 2h2v3H4zM12 2h2v3h-2z" fill="#9a9a9a"/><rect x="7" y="6" width="4" height="4" fill="#8a8a8a"/></svg></span>
      <i></i>
    </div>
    <div class="filter">草绘</div>
    `
  }
}

class CrBanner extends HTMLElement {
  constructor () {
    super()
    this.attachShadow({ mode: 'open' })
  }
  connectedCallback () {
    this.shadowRoot.innerHTML = `
    <style>
      :host { display: flex; height: 48px; background: #f7f3f6; font-family: ${FONT}; overflow: hidden; }
      .mark { width: 6px; height: 43px; margin-top: 3px; border-radius: 0 5px 5px 0; background: #2b8ccb; flex: none; }
      .logo { width: 144px; flex: none; padding: 4px 0 0 6px; box-sizing: border-box; }
      .name { font: bold 21.200px/26px ${FONT}; color: #2e86c1; white-space: nowrap; }
      .name b { color: #f0a43a; font-weight: bold; }
      .name u { color: #f3c57a; text-decoration: none; }
      .url { font: 10px/12px ${FONT}; letter-spacing: 1.600px; color: #666; padding-left: 2px; white-space: nowrap; }
      .notice { flex: 1; font: bold 26.500px/48px ${FONT}; color: #2b7db5; white-space: nowrap; }
      .notice span { font-weight: 500; letter-spacing: 1px; }
      .stamp { width: 123px; flex: none; background: #1f82c4; color: #fff; font: bold 34.500px/48px "Noto Sans CJK SC", sans-serif; padding-left: 25px; box-sizing: border-box; overflow: hidden; white-space: nowrap; }
    </style>
    <div class="mark"></div>
    <div class="logo">
      <div class="name">软件<b>自学</b><u>网</u></div>
      <div class="url">WWW.RJZXW.COM</div>
    </div>
    <div class="notice">视频版权归软件自学网（<span>www.rjzxw.com</span>）彭志勇所有，请勿翻录违者必究。</div>
    <div class="stamp">原创视</div>
    `
  }
}

class CrApp extends HTMLElement {
  constructor () {
    super()
    this.attachShadow({ mode: 'open' })
  }
  connectedCallback () {
    this.shadowRoot.innerHTML = `
    <style>
      :host { display: flex; flex-direction: column; overflow: hidden; }
      .top { display: flex; height: 120px; background: #f8fbff; }
      .left { width: 780px; box-sizing: border-box; border-right: 1px solid #cdd0d4; flex: none; }
      .main { display: flex; height: 505px; box-sizing: border-box; border-top: 1px solid #b9bcc2; }
      .gutter { width: 4px; background: #e6e4e8; flex: none; }
      .view { position: relative; flex: 1; min-width: 0; overflow: hidden; }
    </style>
    <cr-titlebar></cr-titlebar>
    <cr-menu-tabs></cr-menu-tabs>
    <div class="top">
      <div class="left">
        <cr-ribbon></cr-ribbon>
        <cr-sub-tabs></cr-sub-tabs>
      </div>
      <cr-help></cr-help>
    </div>
    <div class="main">
      <cr-tree></cr-tree>
      <div class="gutter"></div>
      <div class="view">
        <cr-model></cr-model>
        <cr-sketch-panel></cr-sketch-panel>
        <cr-view-bar></cr-view-bar>
      </div>
    </div>
    <cr-status></cr-status>
    <cr-banner></cr-banner>
    `
  }
}

customElements.define('cr-titlebar', CrTitlebar)
customElements.define('cr-menu-tabs', CrMenuTabs)
customElements.define('cr-group', CrGroup)
customElements.define('cr-ribbon', CrRibbon)
customElements.define('cr-sub-tabs', CrSubTabs)
customElements.define('cr-help', CrHelp)
customElements.define('cr-tree', CrTree)
customElements.define('cr-sketch-panel', CrSketchPanel)
customElements.define('cr-view-bar', CrViewBar)
customElements.define('cr-model', CrModel)
customElements.define('cr-status', CrStatus)
customElements.define('cr-banner', CrBanner)
customElements.define('cr-app', CrApp)
</script>
</body>
</html>
